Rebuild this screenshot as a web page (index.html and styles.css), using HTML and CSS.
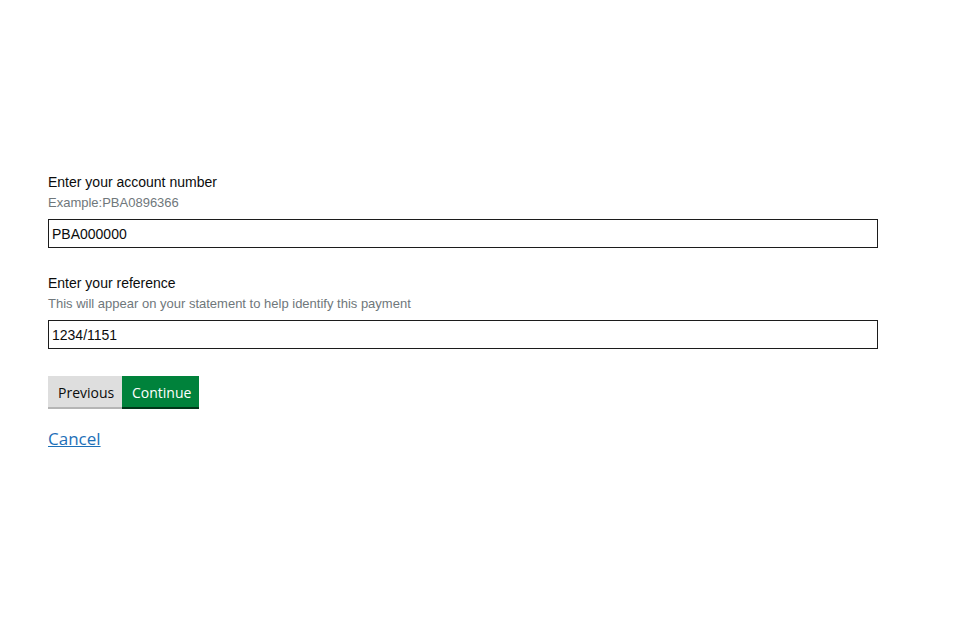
FILE: index.html
```html
<!DOCTYPE html>
<html>
<head>
    <link rel="stylesheet" href="styles.css">
</head>
<body>
    <main class="page">
        <div class="field">
            <label class="field-label" for="account">Enter your account number</label>
            <span class="field-hint">Example:PBA0896366</span>
            <input class="field-input" type="text" id="account" value="PBA000000">
        </div>
        <div class="field">
            <label class="field-label" for="reference">Enter your reference</label>
            <span class="field-hint">This will appear on your statement to help identify this payment</span>
            <input class="field-input" type="text" id="reference" value="1234/1151">
        </div>
        <div class="actions">
            <button class="btn btn-secondary">Previous</button>
            <button class="btn btn-primary">Continue</button>
        </div>
        <a class="cancel" href="#">Cancel</a>
    </main>
</body>
</html>
```
FILE: styles.css
```css
body {
  margin: 0;
  background-color: #fff;
  font-family: "Liberation Sans", Arial, sans-serif;
  color: #0b0c0c;
}

.page {
  width: 830px;
  padding: 172px 0 0 48px;
}

/* Champs */
.field {
  display: flex;
  flex-direction: column;
  margin-bottom: 25px;
}

.field-label {
  font-size: 14px;
  line-height: 20px;
}

.field-hint {
  font-size: 13px;
  line-height: 22px;
  color: #6f777b;
  margin-bottom: 5px;
}

.field-input {
  box-sizing: border-box;
  width: 830px;
  height: 29px;
  margin: 0;
  padding: 2px 3px;
  border: 1px solid #1c1c1c;
  font-family: "Liberation Sans", Arial, sans-serif;
  font-size: 14px;
  color: #0b0c0c;
}

/* Boutons */
.actions {
  display: flex;
  margin-top: 27px;
}

.btn {
  border: none;
  margin: 0;
  height: 31px;
  padding: 2px 10px 0;
  font-family: "Open Sans", "Noto Sans", sans-serif;
  font-size: 14px;
  cursor: pointer;
}

.btn-secondary {
  width: 74px;
  background-color: #dedede;
  color: #0b0c0c;
  box-shadow: 0 2px 0 #b5b5b5;
}

.btn-primary {
  width: 77px;
  background-color: #00823b;
  color: #fff;
  box-shadow: 0 2px 0 #003618;
}

.cancel {
  display: inline-block;
  margin-top: 20px;
  font-family: "Open Sans", "Noto Sans", sans-serif;
  font-size: 17px;
  color: #1d70b8;
}
```
